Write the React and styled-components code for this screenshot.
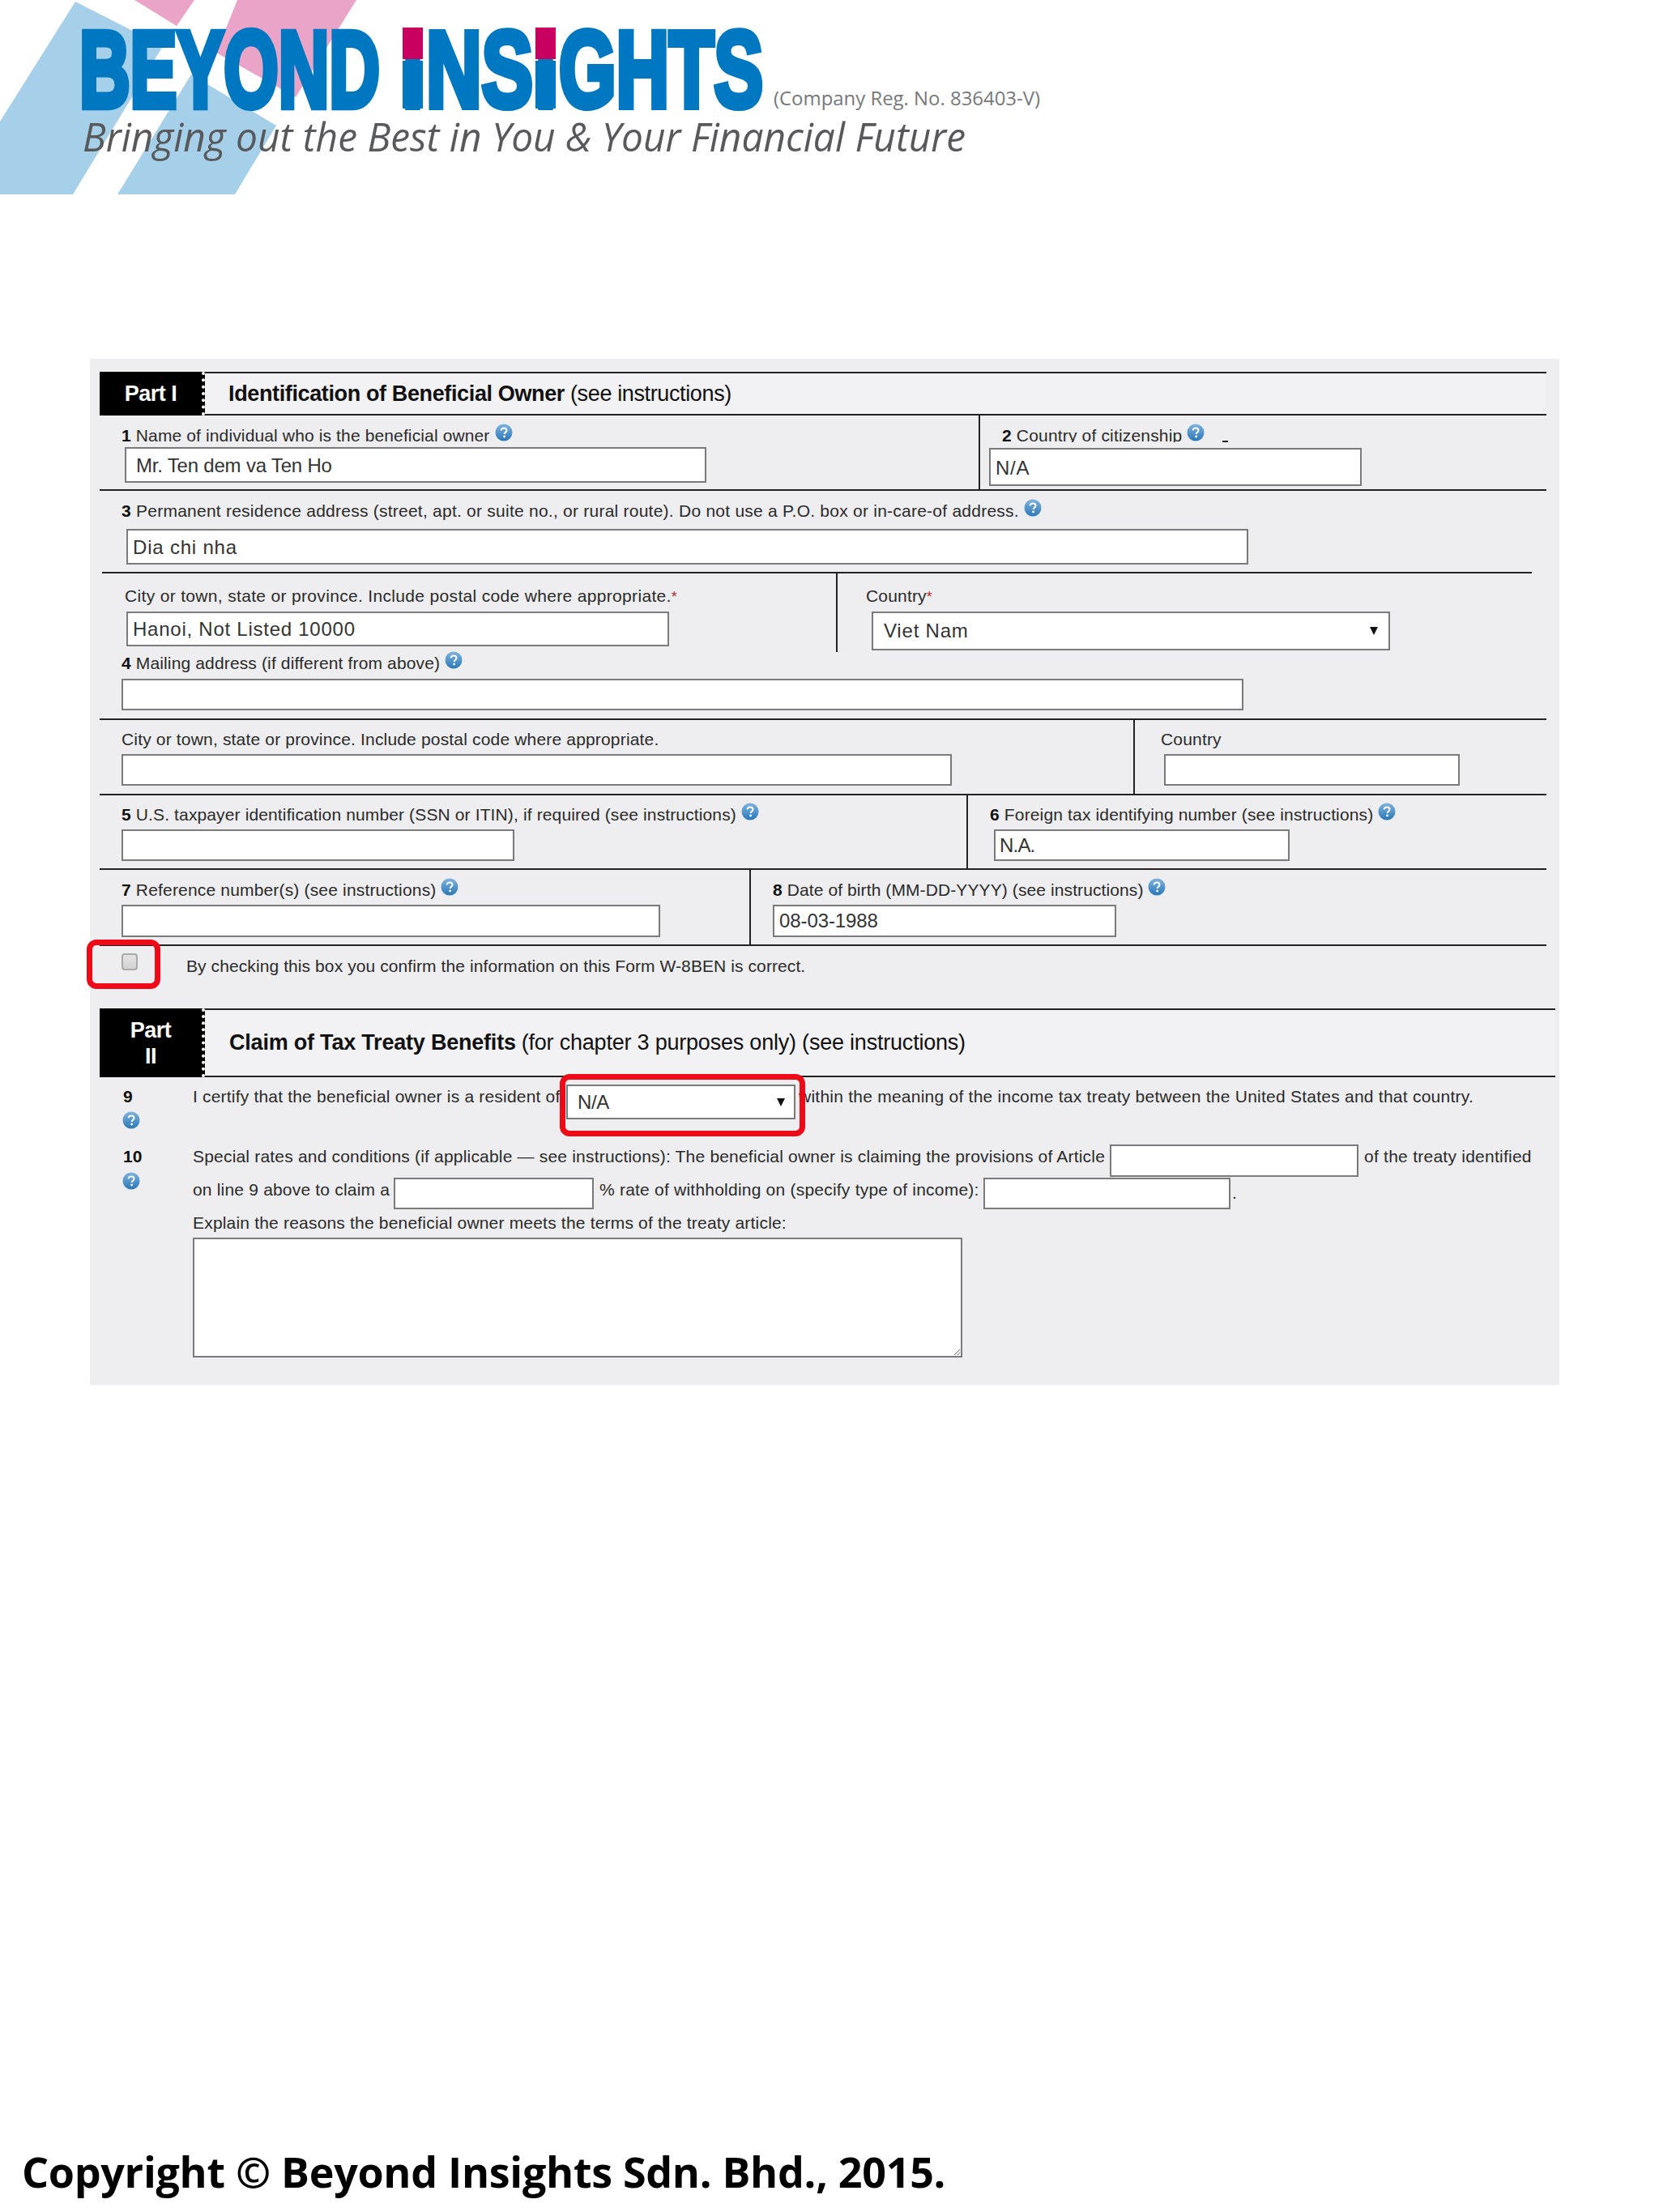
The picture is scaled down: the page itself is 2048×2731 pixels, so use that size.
import React from "react";
import styled, { createGlobalStyle } from "styled-components";

const Global = createGlobalStyle`
  html, body { margin: 0; padding: 0; background: #fff; }
  * { box-sizing: border-box; }
`;

const Page = styled.div`
  width: 2048px;
  height: 2731px;
  display: flex;
  flex-direction: column;
  overflow: hidden;
  font-family: "Liberation Sans", Arial, sans-serif;
  color: #222;
`;

const LogoBar = styled.header`
  height: 443px;
  flex: none;
`;

const Panel = styled.section`
  width: 1814px;
  height: 1267px;
  flex: none;
  margin-left: 111px;
  padding: 16px 0 0 12px;
  background: #eeeef0;
`;

const PartHead = styled.div`
  display: flex;
  width: ${(p) => p.$w}px;
  height: ${(p) => p.$h}px;
  border-top: 2px solid #222;
  border-bottom: 2px solid #222;
`;

const PartTag = styled.div`
  width: 130px;
  flex: none;
  margin: -2px 0;
  display: flex;
  align-items: center;
  justify-content: center;
  text-align: center;
  background: #000;
  border-right: 4px dotted #fff;
  color: #fff;
  font-size: 27px;
  line-height: 32px;
  font-weight: 700;
  letter-spacing: -0.5px;
`;

const PartTitle = styled.div`
  flex: 1;
  display: flex;
  align-items: center;
  padding-left: ${(p) => p.$pl}px;
  background: #f2f2f4;
  font-size: 27px;
  letter-spacing: ${(p) => p.$ls}px;
  color: #111;
  b { margin-right: 7px; }
`;

const Row = styled.div`
  display: flex;
  width: 1786px;
  height: ${(p) => p.$h}px;
  border-bottom: ${(p) => (p.$plain ? "0" : "2px solid #222")};
`;

const Cell = styled.div`
  flex: ${(p) => (p.$w ? "none" : "1")};
  width: ${(p) => (p.$w ? `${p.$w}px` : "auto")};
  padding-top: ${(p) => p.$pt}px;
  border-right: ${(p) => (p.$w ? "2px solid #222" : "0")};
`;

const Rule = styled.div`
  width: 1765px;
  height: 2px;
  margin-left: 3px;
  background: #222;
`;

const Label = styled.div`
  display: flex;
  align-items: center;
  height: 28px;
  margin-left: ${(p) => p.$ml}px;
  font-size: 21px;
  line-height: 28px;
  white-space: pre;
  letter-spacing: ${(p) => p.$ls ?? 0.17}px;
  color: #2a2a2a;
  b { color: #111; }
`;

const ClippedText = styled.span`
  display: block;
  align-self: flex-start;
  height: 22px;
  overflow: hidden;
`;

const Star = styled.span`
  color: #a33;
  font-size: 18px;
  align-self: flex-start;
  margin-top: 1px;
`;

const Tick = styled.span`
  width: 7px;
  height: 2px;
  margin: 14px 0 0 22px;
  background: #222;
`;

const TextInput = styled.input.attrs({ readOnly: true, type: "text" })`
  display: block;
  flex: none;
  width: ${(p) => p.$w}px;
  height: ${(p) => p.$h}px;
  margin-left: ${(p) => p.$ml || 0}px;
  margin-top: ${(p) => p.$mt || 0}px;
  padding: ${(p) => p.$top || 0}px 0 0 ${(p) => p.$pad ?? 7}px;
  border: 2px solid #7a7a7a;
  border-radius: 0;
  outline: 0;
  background: #fff;
  color: #333;
  font-family: "Liberation Sans", Arial, sans-serif;
  font-size: 24px;
  letter-spacing: ${(p) => p.$ls ?? 0.6}px;
`;

const SelectBox = styled.div`
  flex: none;
  display: flex;
  align-items: center;
  justify-content: space-between;
  position: relative;
  width: ${(p) => p.$w}px;
  height: ${(p) => p.$h}px;
  margin-left: ${(p) => p.$ml || 0}px;
  margin-top: ${(p) => p.$mt || 0}px;
  padding: 0 ${(p) => p.$arrowPad}px 0 ${(p) => p.$pad}px;
  border: 2px solid #7a7a7a;
  background: #fff;
  color: #333;
  font-size: 24px;
  letter-spacing: ${(p) => p.$ls}px;
`;

const Arrow = styled.span`
  width: 0;
  height: 0;
  border-left: 5px solid transparent;
  border-right: 5px solid transparent;
  border-top: 10px solid #111;
`;

const CheckRow = styled.div`
  display: flex;
  width: 1786px;
  height: 77px;
  padding: 9px 0 0 27px;
`;

const CheckWrap = styled.div`
  position: relative;
  flex: none;
`;

const CheckBox = styled.div`
  width: 20px;
  height: 21px;
  border: 2px solid #aaa;
  border-radius: 4px;
  background: linear-gradient(#e4e4e4, #d2d2d2);
`;

const RedFrame = styled.div`
  position: absolute;
  left: ${(p) => p.$x}px;
  top: ${(p) => p.$y}px;
  width: ${(p) => p.$w}px;
  height: ${(p) => p.$h}px;
  border: 7px solid #ee0a17;
  border-radius: 12px;
  pointer-events: none;
`;

const Copy = styled.div`
  flex: none;
  margin-top: ${(p) => p.$mt || 0}px;
  margin-left: ${(p) => p.$ml || 0}px;
  width: ${(p) => (p.$w ? `${p.$w}px` : "auto")};
  font-size: 21px;
  line-height: 28px;
  white-space: nowrap;
  letter-spacing: ${(p) => p.$ls ?? 0.19}px;
  color: #2a2a2a;
`;

const ClaimRow = styled.div`
  display: flex;
  width: 1797px;
  height: ${(p) => p.$h}px;
  padding-top: ${(p) => p.$pt}px;
`;

const NumCol = styled.div`
  flex: none;
  width: 115px;
  padding-left: 29px;
  font-size: 21px;
  line-height: 28px;
  font-weight: 700;
  color: #111;
`;

const ClaimBody = styled.div`
  flex: 1;
  display: flex;
  flex-direction: column;
`;

const Line = styled.div`
  display: flex;
  height: ${(p) => p.$h}px;
`;

const Treaty = styled.textarea.attrs({ readOnly: true })`
  display: block;
  width: 950px;
  height: 148px;
  margin-top: 4px;
  border: 2px solid #7a7a7a;
  border-radius: 0;
  outline: 0;
  background: #fff;
`;

const Footer = styled.footer`
  margin-top: 941px;
  padding-left: 27px;
  font-family: "Open Sans", sans-serif;
  font-size: 52px;
  line-height: 60px;
  font-weight: 700;
  letter-spacing: -0.3px;
  color: #000;
`;

const HelpGlyph = styled.svg`
  display: block;
  flex: none;
  width: 22px;
  height: 22px;
  margin: ${(p) => (p.$stacked ? `${p.$stacked}px 0 0 -1px` : "-9px 0 0 6px")};
`;

const HelpIcon = ({ stacked }) => (
  <HelpGlyph viewBox="0 0 22 22" $stacked={stacked}>
    <defs>
      <linearGradient id="helpFill" x1="0" y1="0" x2="0" y2="1">
        <stop offset="0" stopColor="#7fb3de" />
        <stop offset="1" stopColor="#2b78b8" />
      </linearGradient>
    </defs>
    <circle cx="11" cy="11" r="10.5" fill="url(#helpFill)" />
    <path d="M7.6 8.4C7.8 6.4 9.2 5.4 11.1 5.4c2 0 3.4 1.1 3.4 2.9 0 1.4-.8 2.1-1.8 2.8-.8.6-1 1-1 2" fill="none" stroke="#fff" strokeWidth="2" />
    <circle cx="11.6" cy="16" r="1.4" fill="#fff" />
  </HelpGlyph>
);

// squeezed heavy wordmark, each run scaled to the width it has in the logo
const Mark = ({ x, sx, children }) => (
  <text transform={`translate(${x} 132) scale(${sx} 1)`} vectorEffect="non-scaling-stroke">
    {children}
  </text>
);

const Logo = () => (
  <svg width="1320" height="245" viewBox="0 0 1320 245" style={{ display: "block" }}>
    <polygon points="166,0 240,0 218,32" fill="#eaa4c8" />
    <polygon points="293,0 440,0 365,120 267,65" fill="#eaa4c8" />
    <polygon points="93,2 201,57 90,240 0,240 0,150" fill="#a6cfe9" />
    <polygon points="236,92 341,155 290,240 145,240" fill="#a6cfe9" />
    <g fontFamily="'Liberation Sans', Arial, sans-serif" fontWeight="700" fontSize="134" fill="#0078c1" stroke="#0078c1" strokeWidth="7">
      <Mark x={98} sx={0.647}>BEYOND</Mark>
      <Mark x={497} sx={0.67}>I</Mark>
      <Mark x={526} sx={0.709}>NS</Mark>
      <Mark x={661} sx={0.67}>I</Mark>
      <Mark x={690} sx={0.677}>GHTS</Mark>
    </g>
    <rect x="497" y="75" width="25" height="59" fill="#0078c1" />
    <rect x="661" y="75" width="25" height="59" fill="#0078c1" />
    <rect x="497" y="34" width="25" height="39" fill="#c8005f" />
    <rect x="661" y="34" width="25" height="39" fill="#c8005f" />
    <text x="955" y="130" textLength="329" lengthAdjust="spacingAndGlyphs" fontFamily="'Open Sans', sans-serif" fontSize="24" fill="#77787b">(Company Reg. No. 836403-V)</text>
    <text x="102" y="187" textLength="1090" lengthAdjust="spacingAndGlyphs" fontFamily="'Open Sans', sans-serif" fontStyle="italic" fontSize="50" fill="#58595b">Bringing out the Best in You &amp; Your Financial Future</text>
  </svg>
);

export default function App() {
  return (
    <Page>
      <Global />
      <LogoBar>
        <Logo />
      </LogoBar>
      <Panel>
        <PartHead $w={1786} $h={54}>
          <PartTag>Part I</PartTag>
          <PartTitle $pl={29} $ls={-0.37}>
            <b>Identification of Beneficial Owner</b> (see instructions)
          </PartTitle>
        </PartHead>

        <Row $h={93}>
          <Cell $w={1087} $pt={11}>
            <Label $ml={27} $ls={0.13}>
              <b>1</b> Name of individual who is the beneficial owner
              <HelpIcon />
            </Label>
            <TextInput $ml={31} $w={718} $h={44} $pad={12} $top={2} $ls={-0.2} value="Mr. Ten dem va Ten Ho" />
          </Cell>
          <Cell $pt={11}>
            <Label $ml={27}>
              <ClippedText>
                <b>2</b> Country of citizenship
              </ClippedText>
              <HelpIcon />
              <Tick />
            </Label>
            <TextInput $ml={11} $mt={1} $w={460} $h={47} $pad={6} $top={2} $ls={0.7} value="N/A" />
          </Cell>
        </Row>

        <Row $h={100} $plain>
          <Cell $pt={11}>
            <Label $ml={27} $ls={0.24}>
              <b>3</b> Permanent residence address (street, apt. or suite no., or rural route). Do not use a P.O. box or in-care-of address.
              <HelpIcon />
            </Label>
            <TextInput $ml={33} $mt={8} $w={1385} $h={44} $pad={6} $top={2} $ls={0.8} value="Dia chi nha" />
          </Cell>
        </Row>
        <Rule />

        <Row $h={97} $plain>
          <Cell $w={911} $pt={14}>
            <Label $ml={31} $ls={0.33}>
              City or town, state or province. Include postal code where appropriate.<Star>*</Star>
            </Label>
            <TextInput $ml={33} $mt={5} $w={670} $h={43} $pad={6} $ls={0.75} value="Hanoi, Not Listed 10000" />
          </Cell>
          <Cell $pt={14}>
            <Label $ml={35}>
              Country<Star>*</Star>
            </Label>
            <SelectBox $ml={42} $mt={5} $w={640} $h={48} $pad={13} $arrowPad={13} $ls={0.8}>
              Viet Nam
              <Arrow />
            </SelectBox>
          </Cell>
        </Row>

        <Row $h={84}>
          <Cell $pt={0}>
            <Label $ml={27} $ls={0.14}>
              <b>4</b> Mailing address (if different from above)
              <HelpIcon />
            </Label>
            <TextInput $ml={27} $mt={5} $w={1385} $h={39} />
          </Cell>
        </Row>

        <Row $h={93}>
          <Cell $w={1278} $pt={10}>
            <Label $ml={27}>City or town, state or province. Include postal code where appropriate.</Label>
            <TextInput $ml={27} $mt={4} $w={1025} $h={39} />
          </Cell>
          <Cell $pt={10}>
            <Label $ml={32}>Country</Label>
            <TextInput $ml={36} $mt={4} $w={365} $h={39} />
          </Cell>
        </Row>

        <Row $h={92}>
          <Cell $w={1072} $pt={10}>
            <Label $ml={27} $ls={0.13}>
              <b>5</b> U.S. taxpayer identification number (SSN or ITIN), if required (see instructions)
              <HelpIcon />
            </Label>
            <TextInput $ml={27} $mt={4} $w={485} $h={39} />
          </Cell>
          <Cell $pt={10}>
            <Label $ml={27} $ls={0.15}>
              <b>6</b> Foreign tax identifying number (see instructions)
              <HelpIcon />
            </Label>
            <TextInput $ml={32} $mt={4} $w={365} $h={39} $pad={5} $ls={-0.8} value="N.A." />
          </Cell>
        </Row>

        <Row $h={94}>
          <Cell $w={804} $pt={11}>
            <Label $ml={27}>
              <b>7</b> Reference number(s) (see instructions)
              <HelpIcon />
            </Label>
            <TextInput $ml={27} $mt={4} $w={665} $h={40} />
          </Cell>
          <Cell $pt={11}>
            <Label $ml={27} $ls={0.1}>
              <b>8</b> Date of birth (MM-DD-YYYY) (see instructions)
              <HelpIcon />
            </Label>
            <TextInput $ml={27} $mt={4} $w={424} $h={40} $pad={6} $ls={-0.1} value="08-03-1988" />
          </Cell>
        </Row>

        <CheckRow>
          <CheckWrap>
            <CheckBox />
            <RedFrame $x={-43} $y={-17} $w={91} $h={61} />
          </CheckWrap>
          <Copy $ml={60} $mt={2} $ls={0.09}>By checking this box you confirm the information on this Form W-8BEN is correct.</Copy>
        </CheckRow>

        <PartHead $w={1797} $h={85}>
          <PartTag>
            Part
            <br />
            II
          </PartTag>
          <PartTitle $pl={30} $ls={-0.21}>
            <b>Claim of Tax Treaty Benefits</b> (for chapter 3 purposes only) (see instructions)
          </PartTitle>
        </PartHead>

        <ClaimRow $h={83} $pt={10}>
          <NumCol>
            9
            <HelpIcon stacked={4} />
          </NumCol>
          <Copy $w={461}>I certify that the beneficial owner is a resident of</Copy>
          <SelectBox $w={283} $h={43} $mt={-1} $pad={12} $arrowPad={11} $ls={-0.4}>
            N/A
            <Arrow />
            <RedFrame $x={-10} $y={-15} $w={303} $h={77} />
          </SelectBox>
          <Copy $ml={4} $ls={0.24}>within the meaning of the income tax treaty between the United States and that country.</Copy>
        </ClaimRow>

        <ClaimRow $h={280} $pt={1}>
          <NumCol>
            10
            <HelpIcon stacked={5} />
          </NumCol>
          <ClaimBody>
            <Line $h={40}>
              <Copy $w={1132}>
                Special rates and conditions (if applicable — see instructions): The beneficial owner is claiming the provisions of Article
              </Copy>
              <TextInput $mt={-1} $w={307} $h={40} />
              <Copy $ml={7} $ls={0.25}>of the treaty identified</Copy>
            </Line>
            <Line $h={40}>
              <Copy $mt={1} $w={248}>on line 9 above to claim a</Copy>
              <TextInput $w={247} $h={39} />
              <Copy $mt={1} $ml={7} $w={474} $ls={0.22}>% rate of withholding on (specify type of income):</Copy>
              <TextInput $w={305} $h={39} />
              <Copy $mt={5} $ml={2}>.</Copy>
            </Line>
            <Copy $mt={2}>Explain the reasons the beneficial owner meets the terms of the treaty article:</Copy>
            <Treaty />
          </ClaimBody>
        </ClaimRow>
      </Panel>
      <Footer>Copyright © Beyond Insights Sdn. Bhd., 2015.</Footer>
    </Page>
  );
}
